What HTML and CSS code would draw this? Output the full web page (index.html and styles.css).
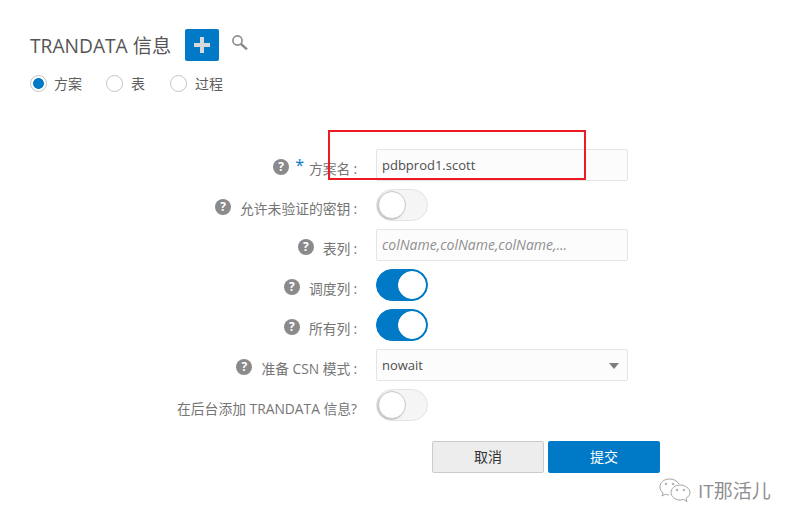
FILE: index.html
```html
<!DOCTYPE html>
<html lang="zh">
<head>
<meta charset="utf-8">
<title>TRANDATA 信息</title>
<link rel="stylesheet" href="styles.css">
</head>
<body>
<div class="page">
  <header class="head">
    <h1 class="title">TRANDATA 信息</h1>
    <button class="add" aria-label="添加"><span class="plus"></span></button>
    <svg class="search" width="18" height="18" viewBox="0 0 18 18"><circle cx="6.5" cy="6.5" r="4.6" fill="none" stroke="#8b8b8d" stroke-width="1.6"/><path d="M10 10l6 5.4" stroke="#8b8b8d" stroke-width="2.4" fill="none"/></svg>
  </header>
  <div class="radios">
    <label class="radio"><span class="dot on"></span>方案</label>
    <label class="radio"><span class="dot"></span>表</label>
    <label class="radio"><span class="dot"></span>过程</label>
  </div>
  <form class="form">
    <div class="row">
      <div class="label"><span class="help">?</span><span class="req">*</span><span>方案名</span><span class="colon">:</span></div>
      <div class="input">pdbprod1.scott</div>
    </div>
    <div class="row">
      <div class="label"><span class="help">?</span><span>允许未验证的密钥</span><span class="colon">:</span></div>
      <div class="switch"><span class="knob"></span></div>
    </div>
    <div class="row">
      <div class="label"><span class="help">?</span><span>表列</span><span class="colon">:</span></div>
      <div class="input hint">colName,colName,colName,...</div>
    </div>
    <div class="row">
      <div class="label"><span class="help">?</span><span>调度列</span><span class="colon">:</span></div>
      <div class="switch on"><span class="knob"></span></div>
    </div>
    <div class="row">
      <div class="label"><span class="help">?</span><span>所有列</span><span class="colon">:</span></div>
      <div class="switch on"><span class="knob"></span></div>
    </div>
    <div class="row">
      <div class="label"><span class="help">?</span><span>准备 CSN 模式</span><span class="colon">:</span></div>
      <div class="input select">nowait<span class="arrow"></span></div>
    </div>
    <div class="row">
      <div class="label"><span>在后台添加 TRANDATA 信息?</span></div>
      <div class="switch"><span class="knob"></span></div>
    </div>
    <div class="actions">
      <button type="button" class="btn cancel">取消</button>
      <button type="button" class="btn submit">提交</button>
    </div>
  </form>
  <div class="mark"></div>
  <div class="wm">
    <svg width="32" height="26" viewBox="0 0 32 26" fill="none" stroke="#9a9a9a" stroke-width="0.9"><path d="M20 6C18 2.500 14 1 10.500 1 5 1 1 4.500 1 9c0 2.600 1.300 4.600 3.200 6L3 18l3.600-1.700c1 .4 2.400.6 3.600.6"/><path d="M21 7c-5 0-9 3.400-9 7.500S16 22 21 22c1.200 0 2.300-.2 3.400-.6L28 23.500l-1-3.200c2.400-1.400 4-3.500 4-5.800C31 10.400 26 7 21 7z"/><circle cx="7" cy="6" r=".8"/><circle cx="14" cy="6" r=".8"/><circle cx="18" cy="12" r=".8"/><circle cx="25" cy="12" r=".8"/></svg>
    <span class="wm-text">IT那活儿</span>
  </div>
</div>
</body>
</html>
```
FILE: styles.css
```css
* { box-sizing: border-box; }
html, body { margin: 0; padding: 0; background: #fff; }
body { font-family: "Open Sans", "Noto Sans CJK SC", sans-serif; color: #5f5f5f; }
.page { position: relative; width: 796px; height: 526px; overflow: hidden; padding: 29px 30px 0; }
.head { display: flex; align-items: center; height: 32px; }
.title { margin: 0; padding-top: 2px; font-size: 19.200px; font-weight: 400; line-height: 32px; color: #555; }
.add { width: 34px; height: 32px; margin-left: 14px; padding: 0; border: 0; border-radius: 2px; background: #0079c7; display: flex; align-items: center; justify-content: center; }
.plus { position: relative; width: 16px; height: 16px; background: linear-gradient(#d6d8da, #d6d8da) center / 16px 4px no-repeat, linear-gradient(#d6d8da, #d6d8da) center / 4px 16px no-repeat; }
.search { margin-left: 12px; margin-top: -5px; }
.radios { display: flex; height: 24px; margin-top: 10px; }
.radio { display: flex; align-items: center; font-size: 14px; color: #5f5f5f; margin-right: 24px; }
.radio:nth-child(2) { margin-right: 25px; }
.dot { width: 17px; height: 17px; margin-right: 7px; border: 1px solid #c4c4c4; border-radius: 50%; background: #fff; }
.radio + .radio .dot { margin-right: 8px; }
.dot.on { background: radial-gradient(circle, #0079c7 0, #0079c7 5px, #fff 5.800px); }
.form { display: flex; flex-direction: column; gap: 8px; margin-top: 54px; }
.row { display: flex; align-items: center; height: 32px; }
.label { width: 327px; padding-top: 6px; display: flex; justify-content: flex-end; align-items: center; font-size: 13.800px; color: #757575; white-space: nowrap; }
.colon { margin-left: 3px; }
.help { width: 16px; height: 16px; margin: -2px 9px 0 0; border-radius: 50%; background: #8a8a8c; color: #fff; font-size: 12px; font-weight: 700; line-height: 16px; text-align: center; }
.req { margin: -6px 5px 0 -3px; color: #0079c7; font-size: 16px; line-height: 16px; }
.input { width: 252px; height: 32px; margin-left: 19px; padding: 0 5px; border: 1px solid #e4e4e4; border-radius: 2px; background: #fcfcfc; font-size: 13px; line-height: 30px; color: #4e4e4e; }
.hint { color: #8f8f8f; font-style: italic; font-size: 14px; }
.select { position: relative; }
.arrow { position: absolute; right: 8px; top: 13px; border: 5.500px solid transparent; border-top: 6px solid #7d7d7d; border-bottom: 0; }
.switch { width: 52px; height: 32px; margin-left: 19px; padding: 1px; border: 1px solid #e4e4e4; border-radius: 16px; background: #f5f5f5; display: flex; }
.knob { width: 28px; height: 28px; border: 1px solid #c6c6c6; border-radius: 50%; background: #fff; box-shadow: -1px 1px 1px #c8c8c8; }
.switch.on { justify-content: flex-end; background: #0079c7; border-color: #0079c7; }
.switch.on .knob { border-color: #fff; box-shadow: none; }
.actions { display: flex; gap: 4px; margin: 12px 0 0 402px; }
.btn { width: 112px; height: 32px; padding: 0 0 2px; border-radius: 2px; font-family: inherit; font-size: 14px; }
.cancel { border: 1px solid #cbcbcb; background: #ededed; color: #333; }
.submit { border: 0; background: #0079c7; color: #fff; }
.mark { position: absolute; left: 328px; top: 130px; width: 258px; height: 50px; border: 2px solid #ec1c24; }
.wm { position: absolute; left: 659px; top: 477px; display: flex; align-items: center; gap: 7px; }
.wm-text { font-size: 19px; line-height: 28px; color: #8f8f8f; }
```
